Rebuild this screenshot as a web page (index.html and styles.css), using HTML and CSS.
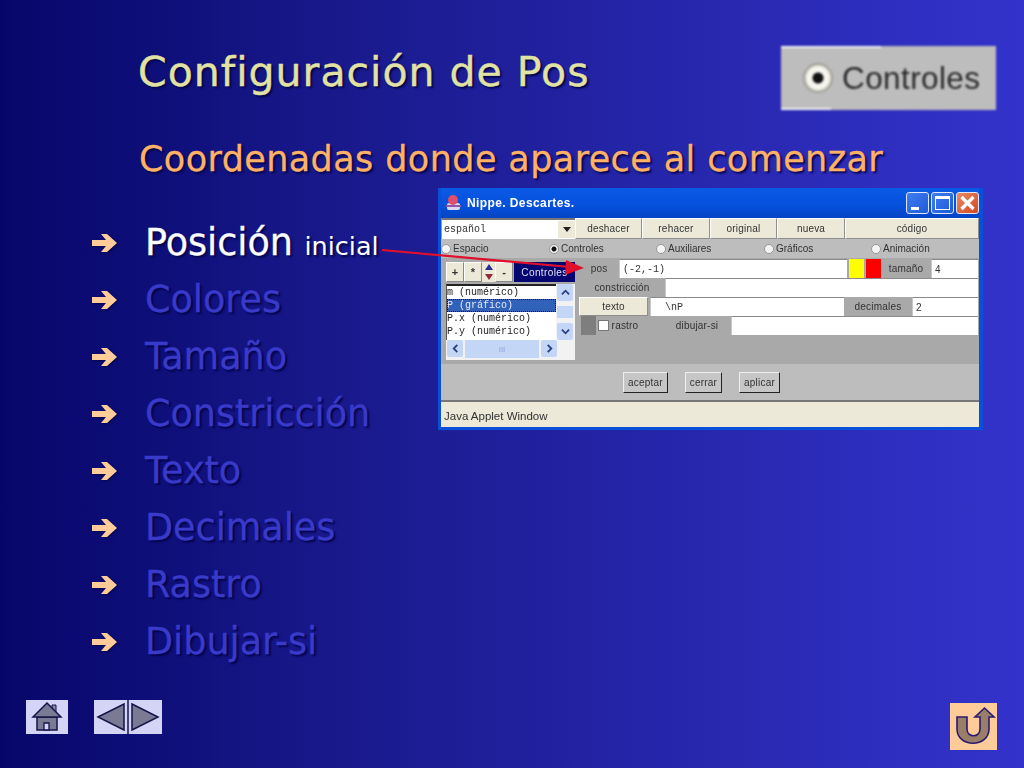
FILE: index.html
```html
<!DOCTYPE html><html lang="es">
<head>
  <meta charset="UTF-8" />
  <meta name="viewport" content="width=device-width, initial-scale=1.0" />
  <title>Configuración de Pos</title>
  <link rel="stylesheet" href="styles.css">
</head>
<body>
  <div class="slide">
    <div class="head">
      <h1>Configuración de Pos</h1>
      <div class="badge"><span class="badge-radio"></span><span>Controles</span></div>
    </div>
    <h2>Coordenadas donde aparece al comenzar</h2>

    <div class="main">
      <ul class="items">
        <li class="current"><svg class="bullet" viewBox="0 0 26 20"><path d="M0 7h14L9 1h6l10 9-10 9H9l5-6H0z"/></svg>Posición <small>inicial</small></li>
        <li><svg class="bullet" viewBox="0 0 26 20"><path d="M0 7h14L9 1h6l10 9-10 9H9l5-6H0z"/></svg>Colores</li>
        <li><svg class="bullet" viewBox="0 0 26 20"><path d="M0 7h14L9 1h6l10 9-10 9H9l5-6H0z"/></svg>Tamaño</li>
        <li><svg class="bullet" viewBox="0 0 26 20"><path d="M0 7h14L9 1h6l10 9-10 9H9l5-6H0z"/></svg>Constricción</li>
        <li><svg class="bullet" viewBox="0 0 26 20"><path d="M0 7h14L9 1h6l10 9-10 9H9l5-6H0z"/></svg>Texto</li>
        <li><svg class="bullet" viewBox="0 0 26 20"><path d="M0 7h14L9 1h6l10 9-10 9H9l5-6H0z"/></svg>Decimales</li>
        <li><svg class="bullet" viewBox="0 0 26 20"><path d="M0 7h14L9 1h6l10 9-10 9H9l5-6H0z"/></svg>Rastro</li>
        <li><svg class="bullet" viewBox="0 0 26 20"><path d="M0 7h14L9 1h6l10 9-10 9H9l5-6H0z"/></svg>Dibujar-si</li>
      </ul>

      <div class="window">
        <div class="titlebar">
          <svg class="app-icon" viewBox="0 0 18 18"><rect x="3" y="9" width="13" height="7" rx="2" fill="#d9d9f0"/><circle cx="9" cy="6" r="5" fill="#e0506a"/><path d="M2 12h15" stroke="#8a5aa8" stroke-width="2"/></svg>
          <span class="title-text">Nippe. Descartes.</span>
          <div class="win-btns">
            <span class="win-btn"><i class="min"></i></span>
            <span class="win-btn"><i class="max"></i></span>
            <span class="win-btn close"><svg viewBox="0 0 20 20"><path d="M4 4l12 12M16 4L4 16" stroke="#fff" stroke-width="3.4"/></svg></span>
          </div>
        </div>

        <div class="toolbar">
          <div class="lang"><span>español</span><b><svg viewBox="0 0 8 5"><path d="M0 0h8L4 5z"/></svg></b></div>
          <button class="tb w1">deshacer</button>
          <button class="tb w2">rehacer</button>
          <button class="tb w3">original</button>
          <button class="tb w2">nueva</button>
          <button class="tb grow">código</button>
        </div>

        <div class="tabs">
          <span class="tab t1"><i class="radio"></i>Espacio</span>
          <span class="tab t2"><i class="radio on"></i>Controles</span>
          <span class="tab t3"><i class="radio"></i>Auxiliares</span>
          <span class="tab t4"><i class="radio"></i>Gráficos</span>
          <span class="tab"><i class="radio"></i>Animación</span>
        </div>

        <div class="work">
          <div class="side">
            <div class="side-top">
              <span class="sq">+</span><span class="sq">*</span>
              <span class="updown"><i class="up"></i><i class="down"></i></span>
              <span class="sq">-</span>
              <span class="side-title">Controles</span>
            </div>
            <div class="picker">
              <div class="listbox">
                <div class="rows">
                  <div>m (numérico)</div>
                  <div class="sel">P (gráfico)</div>
                  <div>P.x (numérico)</div>
                  <div>P.y (numérico)</div>
                </div>
                <div class="vscroll">
                  <span class="sb"><svg viewBox="0 0 10 6"><path d="M1 5l4-4 4 4" /></svg></span>
                  <span class="sb-track"><i></i></span>
                  <span class="sb"><svg viewBox="0 0 10 6"><path d="M1 1l4 4 4-4" /></svg></span>
                </div>
              </div>
              <div class="hscroll">
                <span class="sb"><svg viewBox="0 0 6 10"><path d="M5 1L1 5l4 4" /></svg></span>
                <span class="sb-thumb">III</span>
                <span class="sb"><svg viewBox="0 0 6 10"><path d="M1 1l4 4-4 4" /></svg></span>
              </div>
            </div>
          </div>

          <div class="form">
            <div class="row">
              <span class="lbl l-pos">pos</span>
              <span class="field mono grow">(-2,-1)</span>
              <span class="swatch yellow"></span><span class="swatch red"></span>
              <span class="lbl l-size">tamaño</span>
              <span class="field l-val">4</span>
            </div>
            <div class="row">
              <span class="lbl l-con">constricción</span>
              <span class="field grow"></span>
            </div>
            <div class="row">
              <button class="tb l-txt">texto</button>
              <span class="field mono grow indent">\nP</span>
              <span class="lbl l-dec">decimales</span>
              <span class="field l-val2">2</span>
            </div>
            <div class="row">
              <span class="gray-box"></span><span class="check"></span>
              <span class="lbl l-ras">rastro</span>
              <span class="lbl l-dib">dibujar-si</span>
              <span class="field grow"></span>
            </div>
          </div>
        </div>

        <div class="actions">
          <button class="act">aceptar</button>
          <button class="act">cerrar</button>
          <button class="act">aplicar</button>
        </div>
        <div class="status">Java Applet Window</div>
      </div>
    </div>

    <svg class="pointer" width="210" height="40" viewBox="0 0 210 40"><path d="M2 4L190 21" stroke="#e0102c" stroke-width="2.2"/><path d="M204 22L186 14l-1 15z" fill="#e0102c"/></svg>

    <div class="foot">
      <div class="nav">
        <span class="nav-btn home">
          <svg viewBox="0 0 42 34" width="42" height="34"><path d="M26 5h4v9h-4z" fill="#8a8aa4" stroke="#15154a"/><path d="M11 17h20v13H11z" fill="#7a7a94" stroke="#15154a" stroke-width="1.5"/><path d="M18 30v-7h5v7z" fill="#d4d4f6" stroke="#15154a" stroke-width="1.3"/><path d="M7 17L21 3l14 14z" fill="#7a7a94" stroke="#15154a" stroke-width="1.5"/></svg>
        </span>
        <span class="nav-btn pair">
          <svg viewBox="0 0 68 34" width="68" height="34"><path d="M4 17L30 4v26z" fill="#7a7a94" stroke="#15154a" stroke-width="1.5"/><path d="M34 0v34" stroke="#15154a" stroke-width="1.5"/><path d="M38 4l26 13-26 13z" fill="#7a7a94" stroke="#15154a" stroke-width="1.5"/></svg>
        </span>
      </div>
      <span class="nav-btn back">
        <svg viewBox="0 0 47 47" width="47" height="47"><path d="M7 14h10v12c0 9 13 9 13 0V14h-5l9.500-9L44 14h-5v12c0 19-32 19-32 0z" fill="#9a7f68" stroke="#2a1a70" stroke-width="1.6"/></svg>
      </span>
    </div>
  </div>
</body>
</html>
```

FILE: styles.css
```css
* {
  box-sizing: border-box;
}

body {
  margin: 0;
  font-family: 'DejaVu Sans', sans-serif;
}

.slide {
  position: relative;
  width: 1024px;
  height: 768px;
  overflow: hidden;
  padding-top: 46px;
  display: flex;
  flex-direction: column;
  background: linear-gradient(90deg, #06066a 0%, #1a1a8e 35%, #3333cc 100%);
}

/* heading */
.head {
  display: flex;
  justify-content: space-between;
  padding: 0 28px 0 138px;
  height: 64px;
  flex: none;
}

h1 {
  margin: 0;
  font-size: 41px;
  line-height: 52px;
  font-weight: 400;
  letter-spacing: 1px;
  color: #e2e2a4;
  -webkit-text-stroke: 0.4px #e2e2a4;
  text-shadow: 2px 2px 2px #04044a;
  white-space: nowrap;
}

h2 {
  margin: 20px 0 0 139px;
  font-size: 35px;
  line-height: 58px;
  height: 58px;
  flex: none;
  font-weight: 400;
  letter-spacing: 0.4px;
  white-space: nowrap;
  color: #ffb266;
  -webkit-text-stroke: 0.3px #ffb266;
  text-shadow: 2px 2px 2px #04044a;
}

.badge {
  width: 215px;
  height: 64px;
  background:
    linear-gradient(#f4f4f4, #f4f4f4) no-repeat left top / 100px 2px,
    linear-gradient(#f4f4f4, #f4f4f4) no-repeat left bottom / 50px 2px,
    #bdbdbd;
  display: flex;
  align-items: center;
  gap: 9px;
  padding-left: 22px;
  font-family: 'Liberation Sans', sans-serif;
  font-size: 31.5px;
  letter-spacing: 0.4px;
  color: #2a2a2a;
  filter: blur(0.9px);
}

.badge-radio {
  width: 30px;
  height: 30px;
  border-radius: 50%;
  background: radial-gradient(circle, #111 0 5px, #f6f6ee 6px 11px, #8a8a80 15px);
}

/* bullets and applet */
.main {
  display: flex;
  flex: none;
}

.items {
  list-style: none;
  margin: 26px 0 0;
  padding: 0 0 0 92px;
  width: 438px;
}

.items li {
  display: flex;
  align-items: center;
  height: 57px;
  font-size: 36.5px;
  color: #3a3aca;
  -webkit-text-stroke: 0.3px currentColor;
  text-shadow: 2px 2px 2px #04044a;
  white-space: pre;
}

.items li.current {
  color: #fff;
}

.items small {
  font-size: 25.5px;
  margin-top: 6px;
  -webkit-text-stroke: 0;
}

.bullet {
  width: 26px;
  height: 20px;
  margin-right: 27px;
  fill: #ffcc99;
  filter: drop-shadow(1px 1px 1px #04044a);
}

.window {
  width: 545px;
  height: 242px;
  padding: 0 4px 3px 3px;
  background: #0a4fd8;
  font-family: 'Liberation Sans', sans-serif;
  font-size: 10px;
  color: #333;
  display: flex;
  flex-direction: column;
  filter: blur(0.45px);
}

.titlebar {
  height: 30px;
  flex: none;
  display: flex;
  align-items: center;
  padding-left: 3px;
  background: linear-gradient(180deg, #0a5ae6 0%, #0650dc 60%, #0444c4 100%);
}

.app-icon {
  width: 18px;
  height: 18px;
  margin-right: 5px;
}

.title-text {
  font-weight: 700;
  font-size: 12px;
  letter-spacing: 0.4px;
  color: #fff;
}

.win-btns {
  margin-left: auto;
  display: flex;
  gap: 2px;
}

.win-btn {
  position: relative;
  width: 23px;
  height: 22px;
  border: 1px solid #dfe8fb;
  border-radius: 3px;
  background: linear-gradient(135deg, #3f7df0, #1f5ad8);
  display: block;
}

.win-btn.close {
  background: linear-gradient(135deg, #e98a66, #d4481e);
}

.win-btn svg {
  display: block;
  width: 100%;
  height: 100%;
}

.win-btn .min {
  position: absolute;
  left: 4px;
  bottom: 3px;
  width: 8px;
  height: 3px;
  background: #fff;
}

.win-btn .max {
  position: absolute;
  inset: 3px;
  border: 1px solid #fff;
  border-top-width: 3px;
}

.toolbar {
  height: 21px;
  flex: none;
  display: flex;
  background: #bdbdbd;
}

.tb {
  padding: 0;
  margin: 0;
  background: #ece9d8;
  border: 1px solid;
  border-color: #fff #8e8e8e #8e8e8e #fff;
  font: 10px 'Liberation Sans', sans-serif;
  letter-spacing: 0.2px;
  color: #333;
}

.tb.w1 { width: 67px; }
.tb.w2 { width: 68px; }
.tb.w3 { width: 67px; }

.grow {
  flex: 1;
}

.lang {
  width: 134px;
  display: flex;
  align-items: center;
  justify-content: space-between;
  background: #fff;
  border-top: 2px solid #777;
  border-left: 1px solid #999;
  padding-left: 2px;
  font-family: 'Liberation Mono', monospace;
}

.lang b {
  width: 17px;
  height: 17px;
  background: #ece9d8;
  display: flex;
  align-items: center;
  justify-content: center;
}

.lang svg {
  width: 8px;
  height: 5px;
  fill: #222;
}

.tabs {
  height: 19px;
  flex: none;
  display: flex;
  align-items: center;
  background: #bdbdbd;
}

.tab {
  display: flex;
  align-items: center;
  gap: 2px;
}

.t1 { width: 108px; }
.t2 { width: 107px; }
.t3 { width: 108px; }
.t4 { width: 107px; }

.radio {
  width: 10px;
  height: 10px;
  border-radius: 50%;
  background: #f4f4f4;
  border: 1px solid #999;
}

.radio.on {
  background: radial-gradient(circle, #111 0 2px, #f4f4f4 3px);
}

.work {
  flex: none;
  height: 106px;
  display: flex;
  background: #a9a9a9;
}

.side {
  width: 135px;
  padding: 4px 1px 6px 5px;
}

.side-top {
  display: flex;
  height: 20px;
}

.sq {
  width: 18px;
  background: #ece9d8;
  border: 1px solid;
  border-color: #fff #888 #888 #fff;
  display: flex;
  align-items: center;
  justify-content: center;
  font-weight: 700;
  font-size: 11px;
}

.updown {
  width: 13px;
  background: #ece9d8;
  display: flex;
  flex-direction: column;
  justify-content: space-between;
  align-items: center;
  padding: 2px 0;
}

.updown i {
  width: 0;
  height: 0;
  border-left: 4px solid transparent;
  border-right: 4px solid transparent;
}

.updown .up {
  border-bottom: 6px solid #2a2a90;
}

.updown .down {
  border-top: 6px solid #902a3a;
}

.side-title {
  flex: 1;
  margin-left: 1px;
  background: #050570;
  color: #dfe3f5;
  display: flex;
  align-items: center;
  justify-content: center;
  letter-spacing: 0.4px;
}

.picker {
  margin-top: 2px;
  background: #f2f2f2;
  width: 129px;
  height: 76px;
}

.listbox {
  display: flex;
  height: 56px;
}

.rows {
  width: 110px;
  background: #fff;
  border-top: 2px solid #222;
  border-left: 1px solid #555;
  font-family: 'Liberation Mono', monospace;
  font-size: 10px;
  line-height: 13px;
  color: #222;
  white-space: nowrap;
  overflow: hidden;
}

.rows .sel {
  background: #2f62b8;
  color: #e8e8ff;
  outline: 1px dotted #111;
  outline-offset: -1px;
}

.vscroll {
  width: 17px;
  margin-left: 1px;
  display: flex;
  flex-direction: column;
}

.sb {
  width: 16px;
  height: 17px;
  flex: none;
  background: #c4d6f6;
  border-radius: 2px;
  display: flex;
  align-items: center;
  justify-content: center;
}

.sb svg {
  width: 9px;
  height: 9px;
  fill: none;
  stroke: #27408a;
  stroke-width: 2;
}

.sb-track {
  flex: 1;
  display: flex;
  align-items: center;
}

.sb-track i {
  width: 16px;
  height: 12px;
  background: #c4d6f6;
}

.hscroll {
  display: flex;
  gap: 2px;
  height: 18px;
  padding-left: 1px;
  width: 111px;
}

.sb-thumb {
  flex: 1;
  background: #c4d6f6;
  color: #8ea6d6;
  font-size: 8px;
  display: flex;
  align-items: center;
  justify-content: center;
}

.form {
  flex: 1;
  padding: 1px 1px 0 3px;
  display: flex;
  flex-direction: column;
}

.row {
  display: flex;
  align-items: stretch;
  height: 19px;
  flex: none;
}

.lbl {
  display: flex;
  align-items: center;
  justify-content: center;
  letter-spacing: 0.2px;
}

.field {
  background: #fff;
  border-top: 1px solid #8a8a8a;
  border-left: 1px solid #c8c8c8;
  display: flex;
  align-items: center;
  padding-left: 3px;
}

.mono {
  font-family: 'Liberation Mono', monospace;
}

.indent {
  padding-left: 14px;
  margin-left: 2px;
}

.l-pos { width: 40px; }
.l-size { width: 50px; background: #a9a9a9; }
.l-val { width: 47px; }
.l-val2 { width: 66px; }
.l-con { width: 86px; }
.l-txt { width: 69px; }
.l-dec { width: 68px; background: #a9a9a9; }
.l-ras { width: 32px; }
.l-dib { width: 90px; padding-left: 22px; }

.swatch {
  width: 15px;
  margin-left: 2px;
}

.yellow { background: #ffff00; }
.red { background: #ff0000; }

.gray-box {
  width: 15px;
  margin-left: 2px;
  background: #7e7e7e;
}

.check {
  width: 11px;
  height: 11px;
  margin: 4px 0 0 2px;
  background: #fff;
  border: 1px solid #777;
}

.actions {
  flex: 1;
  display: flex;
  align-items: center;
  padding: 0 0 0 182px;
  gap: 17px;
  background: #bdbdbd;
}

.act {
  height: 21px;
  padding: 0 4px;
  background: #c6c6c6;
  border: 1px solid;
  border-color: #eee #222 #222 #eee;
  font: 10px 'Liberation Sans', sans-serif;
  letter-spacing: 0.2px;
  color: #333;
}

.status {
  height: 27px;
  flex: none;
  display: flex;
  align-items: center;
  padding: 3px 0 0 3px;
  background: #ece9d8;
  border-top: 2px solid #777;
  font-size: 11.5px;
}

/* line from the label to the pos field */
.pointer {
  position: absolute;
  left: 380px;
  top: 246px;
}

/* nav buttons */
.foot {
  margin-top: auto;
  height: 68px;
  flex: none;
  padding: 0 27px 0 26px;
  display: flex;
  justify-content: space-between;
  align-items: flex-start;
}

.nav {
  display: flex;
  gap: 26px;
}

.nav-btn {
  display: block;
  background: #d4d4f6;
  line-height: 0;
}

.back {
  margin-top: 3px;
  background: #ffcc99;
}
```
